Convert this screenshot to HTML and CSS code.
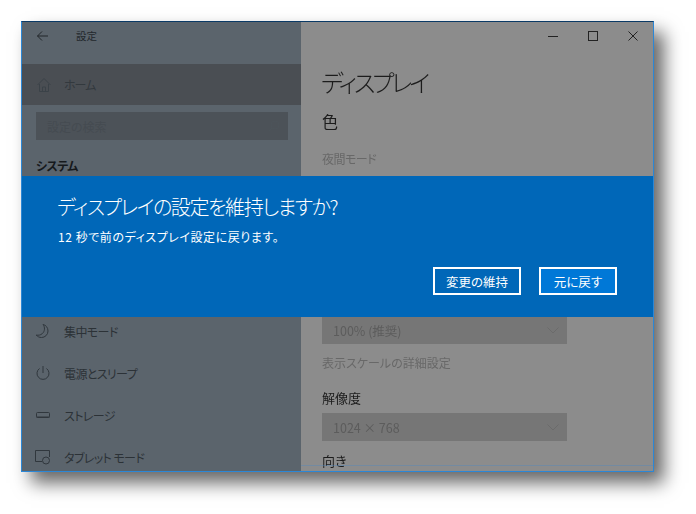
FILE: index.html
```html
<!DOCTYPE html>
<html lang="ja">
<head>
<meta charset="utf-8">
<title>設定</title>
<link rel="stylesheet" href="styles.css">
</head>
<body>
<div class="window">
  <aside class="sidebar">
    <div class="titlebar">
      <svg class="back" width="11" height="10" viewBox="0 0 11 10"><path d="M5 .5.500 5 5 9.500M.5 5H11" fill="none" stroke="#22262a" stroke-width="1"/></svg>
      <span class="title">設定</span>
    </div>
    <div class="home">
      <svg class="icon" width="16" height="16" viewBox="0 0 16 16"><path d="M1.500 8 8 1.500 14.500 8M3.500 7v7.500h9V7M6.500 14.500V10h3v4.500" fill="none" stroke="#3b4248" stroke-width="1"/></svg>
      <span class="home-label">ホーム</span>
    </div>
    <div class="search">
      <span>設定の検索</span>
      <svg width="14" height="14" viewBox="0 0 14 14"><circle cx="8" cy="6" r="4" fill="none" stroke="#4c545a"/><path d="M5 9 1.500 12.500" stroke="#4c545a"/></svg>
    </div>
    <h2 class="section">システム</h2>
  </aside>
  <main class="content">
    <div class="controls">
      <svg width="10" height="10" viewBox="0 0 10 10"><path d="M0 5.500h10" stroke="#222"/></svg>
      <svg width="10" height="10" viewBox="0 0 10 10"><rect x=".5" y=".5" width="9" height="9" fill="none" stroke="#222"/></svg>
      <svg width="10" height="10" viewBox="0 0 10 10"><path d="m.5.500 9 9m0-9-9 9" stroke="#222"/></svg>
    </div>
    <h1 class="page-title">ディスプレイ</h1>
    <h2 class="color">色</h2>
    <div class="muted night">夜間モード</div>
  </main>
  <div class="lower">
    <nav class="nav">
      <div class="nav-item">
        <svg class="icon" width="16" height="16" viewBox="0 0 16 16"><path d="M8 1.500c2.200 2.700 2 6.800-.8 9.200-1.700 1.400-3.800 1.800-6 1.300 1.300 1.700 3.300 2.500 5.300 2.500a6.500 6.500 0 0 0 6.500-6.500C13 4.800 11 2 8 1.500Z" fill="none" stroke="#30373d"/></svg>
        <span>集中モード</span>
      </div>
      <div class="nav-item">
        <svg class="icon" width="16" height="16" viewBox="0 0 16 16"><path d="M4.500 3.500a6 6 0 1 0 7 0M8 1v7" fill="none" stroke="#30373d"/></svg>
        <span>電源とスリープ</span>
      </div>
      <div class="nav-item">
        <svg class="icon" width="16" height="16" viewBox="0 0 16 16"><rect x="1.500" y="5.500" width="13" height="5" rx="1" fill="none" stroke="#30373d"/><path d="M1.500 10h13" stroke="#30373d"/></svg>
        <span>ストレージ</span>
      </div>
      <div class="nav-item">
        <svg class="icon" width="16" height="16" viewBox="0 0 16 16"><path d="M7 12.500H.5v-11h14V8" fill="none" stroke="#30373d"/><circle cx="11" cy="11.500" r="3.500" fill="none" stroke="#30373d"/></svg>
        <span>タブレット モード</span>
      </div>
    </nav>
    <section class="settings">
      <div class="select select-top"><span>100% (推奨)</span><svg width="12" height="7" viewBox="0 0 12 7"><path d="m.5.500 5.500 5.500 5.500-5.500" fill="none" stroke="#6b6b6b"/></svg></div>
      <div class="muted link">表示スケールの詳細設定</div>
      <div class="label">解像度</div>
      <div class="select"><span>1024 × 768</span><svg width="12" height="7" viewBox="0 0 12 7"><path d="m.5.500 5.500 5.500 5.500-5.500" fill="none" stroke="#6b6b6b"/></svg></div>
      <div class="label label-last">向き</div>
    </section>
  </div>
  <div class="banner">
    <h2 class="banner-title">ディスプレイの設定を維持しますか?</h2>
    <p class="banner-text">12 秒で前のディスプレイ設定に戻ります。</p>
    <div class="actions">
      <button class="btn keep">変更の維持</button>
      <button class="btn revert">元に戻す</button>
    </div>
  </div>
</div>
</body>
</html>
```
FILE: styles.css
```css
* { box-sizing: border-box; }
html, body { margin: 0; height: 100%; background: #fff; overflow: hidden; }
body {
  padding: 21px 0 0 21px;
  font-family: "Noto Sans CJK JP", "Noto Sans", sans-serif;
  font-feature-settings: "palt";
}
h1, h2, p { margin: 0; font-weight: 400; }

.window {
  position: relative;
  width: 633px;
  height: 451px;
  display: grid;
  grid-template-columns: 279px 1fr;
  grid-template-rows: 154px 1fr;
  background: #8c8c8c;
  border: 1px solid #2b87d6;
  border-top-color: #0b3a66;
  box-shadow: 10px 11px 17px rgba(0, 0, 0, .6);
  overflow: hidden;
  filter: blur(.3px);
}
.window::after {
  content: "";
  position: absolute;
  left: 279px;
  right: 0;
  bottom: 5px;
  height: 1px;
  background: rgba(70, 135, 200, .35);
}

.sidebar { background: #5b646c; color: #23282c; overflow: hidden; }
.titlebar { height: 42px; display: flex; align-items: center; padding: 0 0 15px 15px; }
.title { margin-left: 28px; font-size: 10.5px; }
.home { height: 41px; background: #4a4e53; display: flex; align-items: center; padding-left: 14px; color: #33393e; }
.home-label { margin-left: 12px; font-size: 12px; letter-spacing: -1px; }
.search {
  margin: 7px 13px 0 14px;
  height: 28px;
  background: #4c5258;
  display: flex;
  align-items: center;
  justify-content: space-between;
  padding: 0 7px 0 11px;
  font-size: 12px;
  color: #454b51;
}
.section { margin: 17px 0 0 14px; font-size: 12px; font-weight: 700; line-height: 18px; letter-spacing: -.6px; color: #16191c; }

.content { padding: 0 0 0 21px; color: #1c1c1c; overflow: hidden; }
.controls { height: 27px; display: flex; justify-content: flex-end; align-items: center; gap: 30px; padding: 0 15px 0 0; }
.page-title { margin: 16px 0 0 -1px; font-size: 24px; line-height: 34px; font-weight: 300; letter-spacing: -3.2px; }
.color { margin-top: 10px; font-size: 16px; line-height: 24px; }
.muted { color: #686868; font-size: 12px; line-height: 18px; }
.content .night { margin-top: 17px; letter-spacing: -.5px; }

.lower { grid-column: 1 / -1; display: grid; grid-template-columns: 279px 1fr; min-height: 0; overflow: hidden; padding-top: 141px; }
.nav { background: #5b646c; margin-top: -141px; padding-top: 134px; overflow: hidden; color: #2c3237; }
.nav-item { height: 42px; display: flex; align-items: center; padding-left: 13px; font-size: 12px; letter-spacing: -.6px; }
.nav-item span { margin-left: 13px; }

.settings { padding-left: 21px; overflow: hidden; color: #1c1c1c; }
.select {
  width: 245px;
  height: 28px;
  background: #767676;
  color: #5c5c5c;
  display: flex;
  align-items: center;
  justify-content: space-between;
  padding: 0 8px 0 11px;
  font-size: 12.5px;
}
.select-top { height: 27px; }
.link { margin-top: 10px; }
.label { margin-top: 17px; margin-bottom: 6px; font-size: 13px; line-height: 18px; }
.label-last { margin-top: 11px; }

.banner {
  position: absolute;
  left: 0;
  right: 0;
  top: 154px;
  height: 141px;
  padding: 17px 36px 0 35px;
  background: #0067b8;
  color: #fff;
}
.banner-title { font-size: 20px; line-height: 28px; font-weight: 300; letter-spacing: -1.4px; }
.banner-text { margin: 7px 0 0 1px; font-size: 12px; line-height: 18px; letter-spacing: .55px; }
.actions { margin-top: 21px; display: flex; justify-content: flex-end; gap: 18px; }
.btn {
  height: 28px;
  border: 2px solid #fff;
  color: #fff;
  font: inherit;
  font-size: 12.5px;
  padding: 0;
}
.keep { width: 88px; background: #0067b8; }
.revert { width: 78px; background: #0078d7; }
```
